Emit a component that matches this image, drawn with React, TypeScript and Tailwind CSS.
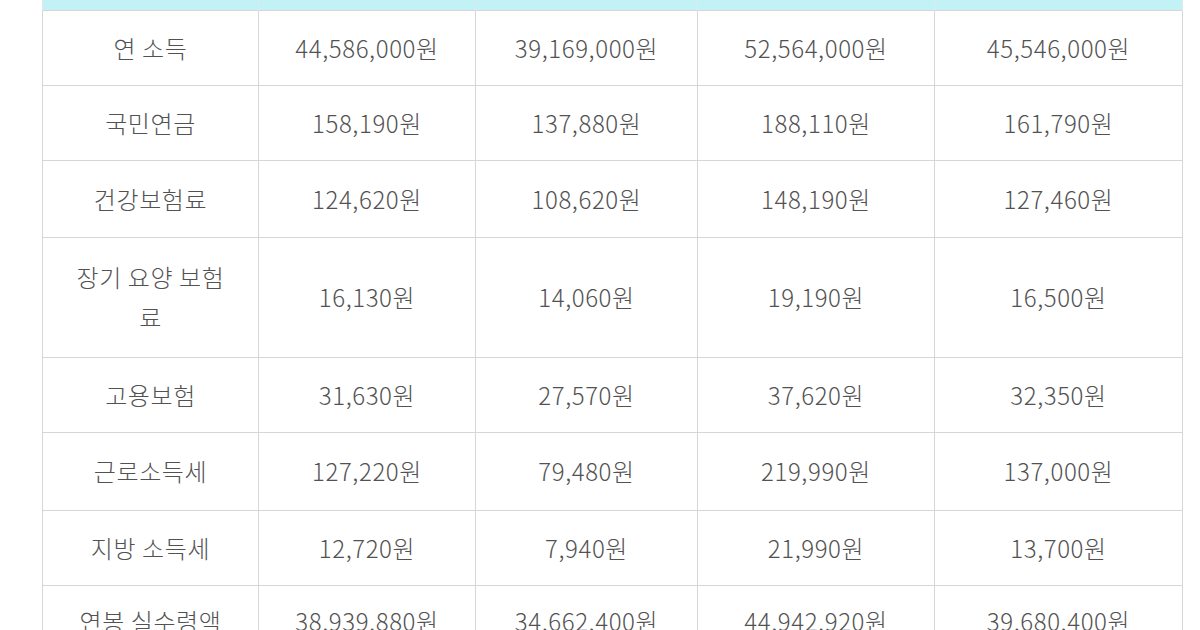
import React from 'react';

const rows: { label: string; values: string[]; h: string }[] = [
  { label: '연 소득', values: ['44,586,000원', '39,169,000원', '52,564,000원', '45,546,000원'], h: 'h-[75px]' },
  { label: '국민연금', values: ['158,190원', '137,880원', '188,110원', '161,790원'], h: 'h-[75px]' },
  { label: '건강보험료', values: ['124,620원', '108,620원', '148,190원', '127,460원'], h: 'h-[77px]' },
  { label: '장기 요양 보험료', values: ['16,130원', '14,060원', '19,190원', '16,500원'], h: 'h-[120px]' },
  { label: '고용보험', values: ['31,630원', '27,570원', '37,620원', '32,350원'], h: 'h-[75px]' },
  { label: '근로소득세', values: ['127,220원', '79,480원', '219,990원', '137,000원'], h: 'h-[78px]' },
  { label: '지방 소득세', values: ['12,720원', '7,940원', '21,990원', '13,700원'], h: 'h-[75px]' },
  { label: '연봉 실수령액', values: ['38,939,880원', '34,662,400원', '44,942,920원', '39,680,400원'], h: 'h-[72px]' },
];

const widths = ['w-[216px]', 'w-[217px]', 'w-[222px]', 'w-[237px]', 'w-[248px]'];

export default function App() {
  return (
    <div className="w-[1200px] h-[630px] overflow-hidden bg-white pl-[42px]">
      <table
        className="table-fixed border-collapse w-[1140px] text-[#525252] text-[24px] leading-[40px] tracking-[0.6px]"
        style={{ fontFamily: '"Noto Sans CJK KR", "Noto Sans", sans-serif' }}
      >
        <colgroup>
          {widths.map((w, i) => (
            <col key={i} className={w} />
          ))}
        </colgroup>
        <thead>
          <tr className="h-[10px] bg-[#c2f2f6]">
            {widths.map((_, i) => (
              <th key={i} className="border-x border-[#e2e8ea] p-0 h-[10px]" />
            ))}
          </tr>
        </thead>
        <tbody>
          {rows.map((r) => (
            <tr key={r.label} className={r.h}>
              <td className="border border-[#d6d6d6] text-center align-middle px-2 whitespace-nowrap font-light">
                {r.label === '장기 요양 보험료' ? (
                  <span>
                    장기 요양 보험
                    <br />료
                  </span>
                ) : (
                  r.label
                )}
              </td>
              {r.values.map((v, i) => (
                <td key={i} className="border border-[#d6d6d6] text-center align-middle whitespace-nowrap font-light">
                  {v}
                </td>
              ))}
            </tr>
          ))}
        </tbody>
      </table>
    </div>
  );
}
